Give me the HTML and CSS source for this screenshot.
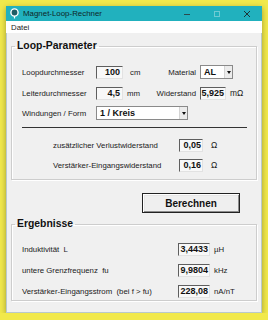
FILE: index.html
```html
<!DOCTYPE html>
<html lang="de">
<head>
    <meta charset="UTF-8">
    <meta name="viewport" content="width=device-width, initial-scale=1.0">
    <title>Magnet-Loop-Rechner</title>
    <link rel="stylesheet" href="styles.css">
</head>
<body>
    <div class="window">
        <div class="titlebar">
            <svg class="app-icon" width="9" height="11" viewBox="0 0 9 11">
                <circle cx="4.5" cy="4.5" r="3.6" fill="#1f5e66" stroke="#fff" stroke-width="1.4"/>
                <line x1="4.5" y1="8" x2="4.5" y2="10.5" stroke="#fff" stroke-width="1.2"/>
            </svg>
            <span class="title">Magnet-Loop-Rechner</span>
            <div class="controls">
                <span class="ctl">
                    <svg width="8" height="8" viewBox="0 0 8 8"><line x1="1" y1="4.5" x2="7" y2="4.5" stroke="#2b4a4d" stroke-width="1"/></svg>
                </span>
                <span class="ctl">
                    <svg width="8" height="8" viewBox="0 0 8 8"><rect x="1.5" y="1.5" width="5" height="5" fill="none" stroke="#6fcbd3" stroke-width="1"/></svg>
                </span>
                <span class="ctl">
                    <svg width="8" height="8" viewBox="0 0 8 8"><path d="M1 1 L7 7 M7 1 L1 7" stroke="#1d3436" stroke-width="1"/></svg>
                </span>
            </div>
        </div>

        <div class="menubar"><span>Datei</span></div>

        <div class="client">
            <!-- Eingaben -->
            <fieldset class="group params">
                <legend>Loop-Parameter</legend>
                <div class="group-body">
                    <div class="row">
                        <span class="lbl">Loopdurchmesser</span>
                        <span class="field w27">100</span>
                        <span class="unit">cm</span>
                        <span class="lbl2">Material</span>
                        <div class="combo w33"><span class="combo-text">AL</span><span class="arrow"></span></div>
                    </div>
                    <div class="row gap7">
                        <span class="lbl">Leiterdurchmesser</span>
                        <span class="field w27">4,5</span>
                        <span class="unit tight">mm</span>
                        <span class="lbl2">Widerstand</span>
                        <span class="field w26">5,925</span>
                        <span class="unit-after">m&Omega;</span>
                    </div>
                    <div class="row gap6">
                        <span class="lbl">Windungen / Form</span>
                        <div class="combo w92"><span class="combo-text">1 / Kreis</span><span class="arrow"></span></div>
                    </div>
                    <div class="separator"></div>
                    <div class="row gap10">
                        <span class="lbl indent">zusätzlicher Verlustwiderstand</span>
                        <span class="field w24">0,05</span>
                        <span class="ohm">&Omega;</span>
                    </div>
                    <div class="row gap6">
                        <span class="lbl indent">Verstärker-Eingangswiderstand</span>
                        <span class="field w24">0,16</span>
                        <span class="ohm">&Omega;</span>
                    </div>
                </div>
            </fieldset>

            <div class="btn-row">
                <button class="btn">Berechnen</button>
            </div>

            <!-- Ergebnisse -->
            <fieldset class="group results">
                <legend>Ergebnisse</legend>
                <div class="group-body">
                    <div class="row">
                        <span class="lbl wide">Induktivität&nbsp; L</span>
                        <span class="field w32">3,4433</span>
                        <span class="res-unit">µH</span>
                    </div>
                    <div class="row gap7">
                        <span class="lbl wide">untere Grenzfrequenz&nbsp; fu</span>
                        <span class="field w32">9,9804</span>
                        <span class="res-unit">kHz</span>
                    </div>
                    <div class="row gap7">
                        <span class="lbl wide">Verstärker-Eingangsstrom&nbsp; (bei f &gt; fu)</span>
                        <span class="field w32">228,08</span>
                        <span class="res-unit">nA/nT</span>
                    </div>
                </div>
            </fieldset>
        </div>
    </div>
</body>
</html>
```

FILE: styles.css
```css
* {
    margin: 0;
    padding: 0;
    box-sizing: border-box;
}
body {
    background: #f1e94b;
    font-family: "Liberation Sans", Arial, sans-serif;
    font-size: 7.8px;
    color: #1a1a1a;
}
.window {
    width: 256px;
    height: 307px;
    margin: 6px 0 0 6px;
    display: flex;
    flex-direction: column;
    box-shadow: 0 2px 6px rgba(0, 0, 0, 0.35);
}
.titlebar {
    height: 15px;
    background: #21b1be;
    display: flex;
    align-items: center;
}
.app-icon {
    margin-left: 4px;
    margin-right: 4px;
}
.title {
    font-size: 7.9px;
    color: #0f2628;
}
.controls {
    margin-left: auto;
    display: flex;
    height: 100%;
}
.ctl {
    width: 30px;
    display: flex;
    align-items: center;
    justify-content: center;
}
.menubar {
    height: 12px;
    background: #fff;
    display: flex;
    align-items: center;
    padding-left: 5px;
}
.client {
    flex: 1;
    background: #f0f0f0;
    border: 1px solid #b9c9cb;
    border-top: none;
    padding: 7px 4px 0 4px;
}
.group {
    border: 1px solid #cdcdcd;
    box-shadow: inset 1px 1px 0 #fff, 1px 1px 0 #fff;
    min-width: 0;
}
.group legend {
    font-weight: bold;
    font-size: 10.4px;
    line-height: 12px;
    margin-left: 3px;
    padding: 0 2px;
    color: #111;
}
.params .group-body {
    padding: 13px 9px 7px 10px;
}
.results .group-body {
    padding: 12px 9px 2px 10px;
}
.results {
    margin-top: 5px;
}
.row {
    display: flex;
    align-items: center;
    height: 14px;
}
.gap6 { margin-top: 6px; }
.gap7 { margin-top: 7px; }
.gap10 { margin-top: 10px; }
.lbl {
    width: 74px;
    white-space: nowrap;
}
.lbl.indent {
    width: 157px;
    padding-left: 31px;
}
.lbl.wide {
    width: 156px;
}
.field {
    height: 13px;
    background: #f8f8f8;
    border-top: 1px solid #5e5e5e;
    border-left: 1px solid #5e5e5e;
    border-right: 1px solid #e2e2e2;
    border-bottom: 1px solid #e2e2e2;
    font-weight: bold;
    font-size: 9px;
    line-height: 11px;
    text-align: right;
    padding-right: 1px;
    color: #111;
}
.w24 { width: 24px; }
.w26 { width: 26px; }
.w27 { width: 27px; padding-right: 2px; }
.w32 { width: 32px; }
.w33 { width: 33px; }
.w92 { width: 92px; }
.unit {
    width: 32px;
    padding-left: 7px;
}
.unit.tight {
    padding-left: 4px;
}
.lbl2 {
    width: 45px;
    text-align: right;
    padding-right: 4px;
    white-space: nowrap;
}
.unit-after {
    margin-left: 4px;
    font-size: 8.4px;
}
.ohm {
    margin-left: 8px;
    font-size: 8.4px;
}
.res-unit {
    margin-left: 4px;
}
.combo {
    height: 14px;
    background: #fff;
    border: 1px solid #8a8a8a;
    display: flex;
    align-items: center;
}
.combo-text {
    flex: 1;
    font-weight: bold;
    font-size: 9px;
    padding-left: 3px;
    color: #111;
}
.arrow {
    width: 8px;
    height: 100%;
    background: #ececec;
    border-left: 1px solid #d4d4d4;
    display: flex;
    align-items: center;
    justify-content: center;
}
.arrow::after {
    content: "";
    border-left: 2.5px solid transparent;
    border-right: 2.5px solid transparent;
    border-top: 3px solid #111;
}
.separator {
    height: 1px;
    background: #333;
    margin-top: 7px;
}
.btn-row {
    display: flex;
    justify-content: flex-end;
    padding-right: 17px;
    margin-top: 13px;
}
.btn {
    width: 98px;
    height: 20px;
    background: #efefef;
    border: 1px solid #222;
    box-shadow: inset 1px 1px 0 #fff, inset -1px -1px 0 #8c8c8c, inset 2px 2px 0 #e6e6e6;
    font-family: "Liberation Sans", Arial, sans-serif;
    font-weight: bold;
    font-size: 10px;
    color: #111;
}
```
